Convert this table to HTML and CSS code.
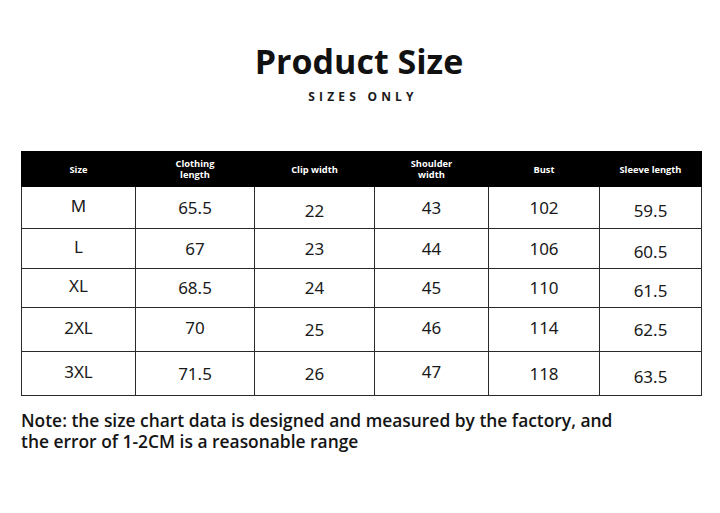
FILE: index.html
```html
<!DOCTYPE html>
<html>
<head>
<meta charset="utf-8">
<link rel="stylesheet" href="styles.css">
</head>
<body>
<div class="page">
  <header class="head">
    <h1 class="title">Product Size</h1>
    <div class="subtitle">SIZES ONLY</div>
  </header>
  <table class="chart">
    <colgroup>
      <col class="c1"><col class="c2"><col class="c3"><col class="c4"><col class="c5"><col class="c6">
    </colgroup>
    <thead>
      <tr class="rh">
        <th>Size</th>
        <th>Clothing<br>length</th>
        <th>Clip width</th>
        <th>Shoulder<br>width</th>
        <th>Bust</th>
        <th>Sleeve length</th>
      </tr>
    </thead>
    <tbody>
      <tr class="r1"><td class="hi">M</td><td>65.5</td><td class="lo">22</td><td>43</td><td>102</td><td class="lo">59.5</td></tr>
      <tr class="r2"><td class="hi">L</td><td>67</td><td>23</td><td>44</td><td>106</td><td class="lo">60.5</td></tr>
      <tr class="r3"><td class="hi">XL</td><td>68.5</td><td>24</td><td>45</td><td>110</td><td class="lo">61.5</td></tr>
      <tr class="r4"><td class="hi">2XL</td><td class="hi">70</td><td>25</td><td class="hi">46</td><td class="hi">114</td><td>62.5</td></tr>
      <tr class="r5"><td class="hi">3XL</td><td>71.5</td><td>26</td><td class="hi">47</td><td>118</td><td class="lo">63.5</td></tr>
    </tbody>
  </table>
  <p class="note">Note: the size chart data is designed and measured by the factory, and<br>the error of 1-2CM is a reasonable range</p>
</div>
</body>
</html>
```
FILE: styles.css
```css
html, body {
  margin: 0;
  padding: 0;
  background: #ffffff;
}
.page {
  width: 720px;
  height: 513px;
  padding: 0 0 0 21px;
  box-sizing: border-box;
  font-family: "Open Sans", "Noto Sans", sans-serif;
  color: #111;
}
.head {
  width: 680px;
  padding-top: 40px;
  text-align: center;
}
.title {
  margin: 0;
  font-family: "Open Sans", sans-serif;
  font-weight: 700;
  font-size: 34px;
  line-height: 42px;
  color: #111;
  padding-right: 4px;
}
.subtitle {
  margin-top: 7px;
  font-family: "Open Sans", sans-serif;
  font-weight: 700;
  font-size: 12px;
  line-height: 16px;
  letter-spacing: 4.2px;
  padding-left: 4px;
  color: #1a1a1a;
}
.chart {
  margin-top: 46px;
  width: 680px;
  border-collapse: collapse;
  table-layout: fixed;
}
.c1 { width: 114px; }
.c2 { width: 119px; }
.c3 { width: 120px; }
.c4 { width: 114px; }
.c5 { width: 111px; }
.c6 { width: 102px; }
.chart th {
  background: #000;
  color: #fff;
  font-family: "Open Sans", sans-serif;
  font-weight: 700;
  font-size: 9.3px;
  line-height: 11px;
  padding: 0;
  text-align: center;
  vertical-align: middle;
  border: 1px solid #000;
}
.rh { height: 35px; }
.chart td {
  border: 1px solid #2a2a2a;
  padding: 0;
  text-align: center;
  vertical-align: middle;
  font-family: "Noto Sans", sans-serif;
  font-size: 17px;
  line-height: 20px;
  color: #1a1a1a;
}
.chart td.lo {
  transform: translateY(3px);
}
.chart td.hi {
  transform: translateY(-2px);
}
.r1 { height: 42px; }
.r2 { height: 40px; }
.r3 { height: 39px; }
.r4 { height: 44px; }
.r5 { height: 44px; }
.note {
  margin: 14px 0 0 0;
  font-family: "Open Sans", sans-serif;
  font-weight: 600;
  font-size: 17.4px;
  line-height: 21px;
  color: #141414;
}
```
